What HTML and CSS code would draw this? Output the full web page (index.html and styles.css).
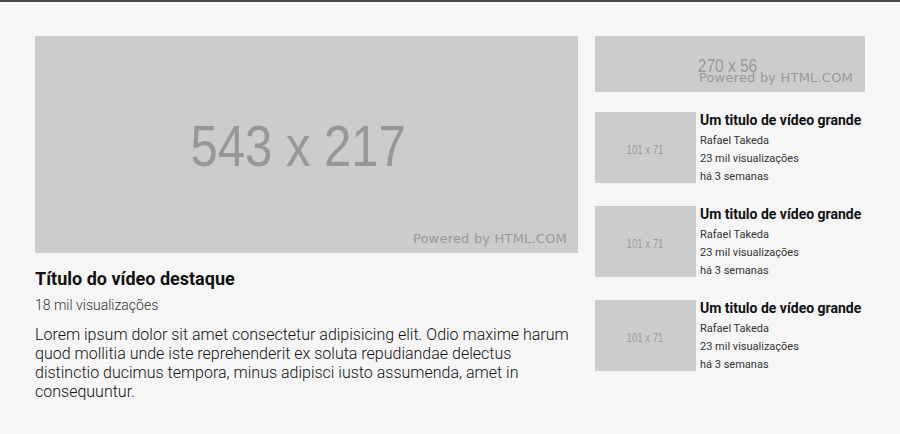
FILE: index.html
```html
<!DOCTYPE html>
<html lang="pt">
<head>
<meta charset="utf-8">
<link rel="stylesheet" href="styles.css">
</head>
<body>
<div class="page">
  <main class="featured">
    <div class="ph ph-big">
      <span class="ph-size">543 x 217</span>
      <span class="ph-credit">Powered by HTML.COM</span>
    </div>
    <h1 class="f-title">Título do vídeo destaque</h1>
    <p class="f-views">18 mil visualizações</p>
    <p class="f-desc">Lorem ipsum dolor sit amet consectetur adipisicing elit. Odio maxime harum quod mollitia unde iste reprehenderit ex soluta repudiandae delectus distinctio ducimus tempora, minus adipisci iusto assumenda, amet in consequuntur.</p>
  </main>
  <aside class="side">
    <div class="ph ph-ad">
      <span class="ph-size">270 x 56</span>
      <span class="ph-credit">Powered by HTML.COM</span>
    </div>
    <div class="item">
      <div class="ph ph-thumb"><span class="ph-size">101 x 71</span></div>
      <div class="meta">
        <h2 class="i-title">Um titulo de vídeo grande</h2>
        <p>Rafael Takeda</p>
        <p>23 mil visualizações</p>
        <p>há 3 semanas</p>
      </div>
    </div>
    <div class="item">
      <div class="ph ph-thumb"><span class="ph-size">101 x 71</span></div>
      <div class="meta">
        <h2 class="i-title">Um titulo de vídeo grande</h2>
        <p>Rafael Takeda</p>
        <p>23 mil visualizações</p>
        <p>há 3 semanas</p>
      </div>
    </div>
    <div class="item">
      <div class="ph ph-thumb"><span class="ph-size">101 x 71</span></div>
      <div class="meta">
        <h2 class="i-title">Um titulo de vídeo grande</h2>
        <p>Rafael Takeda</p>
        <p>23 mil visualizações</p>
        <p>há 3 semanas</p>
      </div>
    </div>
  </aside>
</div>
</body>
</html>
```
FILE: styles.css
```css
html, body {
  margin: 0;
  padding: 0;
}
body {
  background: #f6f6f6;
  border-top: 2px solid #4a4a4a;
  font-family: Roboto, "Liberation Sans", sans-serif;
  color: #222;
  height: 432px;
  overflow: hidden;
}
.page {
  display: flex;
  gap: 17px;
  padding: 34px 35px 0 35px;
}
.featured {
  width: 543px;
  flex: none;
}
.side {
  width: 270px;
  flex: none;
  display: flex;
  flex-direction: column;
}
.ph {
  background: #cccccc;
  position: relative;
  display: flex;
  align-items: center;
  justify-content: center;
  color: #999;
}
.ph-size {
  font-family: "Liberation Sans", sans-serif;
  line-height: 1;
  transform: scaleX(0.86);
}
.ph-credit {
  position: absolute;
  right: 11px;
  bottom: 7px;
  font-family: "DejaVu Sans", sans-serif;
  font-size: 13px;
  color: #999;
  letter-spacing: 0.2px;
}
.ph-big {
  width: 543px;
  height: 217px;
}
.ph-big .ph-size {
  font-size: 57px;
  margin-right: 16px;
  margin-top: 4px;
  color: #979797;
}
.ph-ad {
  width: 270px;
  height: 56px;
  margin-bottom: 20px;
}
.ph-ad .ph-size {
  font-size: 18px;
  margin-top: 4px;
  margin-right: 4px;
}
.ph-ad .ph-credit {
  right: 12px;
  bottom: 7px;
}
.ph-thumb {
  width: 101px;
  height: 71px;
  flex: none;
}
.ph-thumb .ph-size {
  font-size: 12px;
  transform: scaleX(0.8);
  color: #9c9c9c;
  margin-top: 4px;
}
.f-title {
  margin: 13px 0 0;
  font-size: 18px;
  font-weight: 700;
  color: #111;
  line-height: 26px;
}
.f-views {
  margin: 4px 0 0;
  font-size: 14px;
  font-weight: 300;
  color: #333;
  line-height: 18px;
}
.f-desc {
  margin: 11px 0 0;
  font-size: 16px;
  font-weight: 300;
  line-height: 19px;
  color: #111;
}
.item {
  display: flex;
  gap: 4px;
  margin-bottom: 20px;
}
.meta {
  display: flex;
  flex-direction: column;
}
.i-title {
  margin: 0 0 4px;
  font-size: 14px;
  font-weight: 700;
  color: #111;
  line-height: 16px;
}
.meta p {
  margin: 0;
  font-size: 11px;
  line-height: 18px;
  color: #333;
}
```
